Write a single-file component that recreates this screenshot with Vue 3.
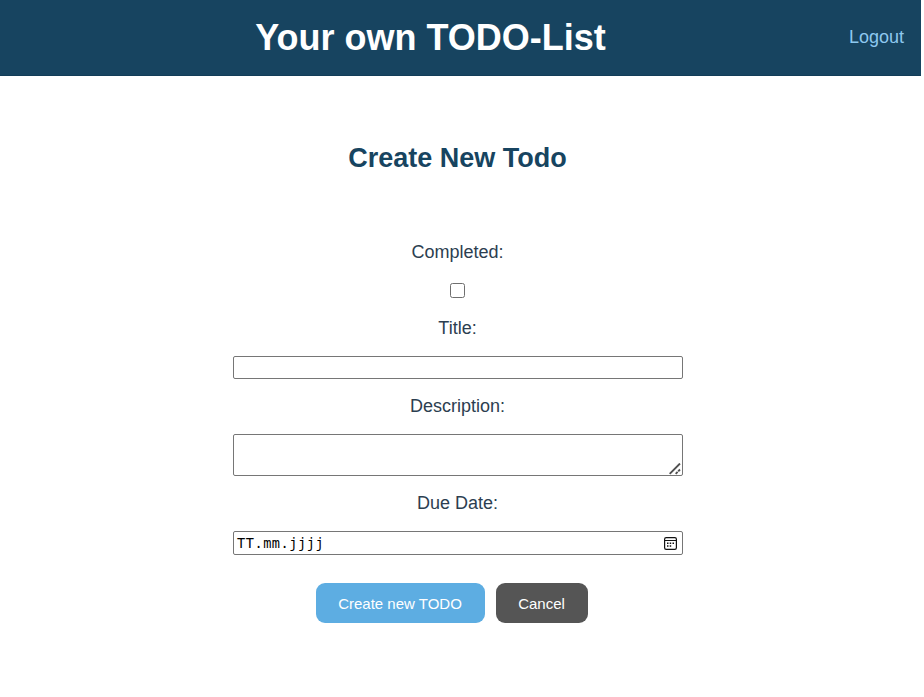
<script setup>
import { ref } from 'vue'

const completed = ref(false)
const title = ref('')
const description = ref('')
</script>

<template>
  <div class="page">
    <header class="header">
      <h1>Your own TODO-List</h1>
      <a class="logout">Logout</a>
    </header>
    <main class="content">
      <h2>Create New Todo</h2>
      <form class="form" @submit.prevent>
        <label for="completed">Completed:</label>
        <input id="completed" v-model="completed" class="check" type="checkbox" />
        <label for="title">Title:</label>
        <input id="title" v-model="title" class="field title" type="text" />
        <label for="description">Description:</label>
        <div class="area-wrap">
          <textarea id="description" v-model="description" class="field area"></textarea>
          <svg class="grip" width="12" height="12" viewBox="0 0 12 12">
            <path d="M.7 10.8 11 .5M6.7 10.8l1.9-1.9M9.2 8.3 11 6.5" fill="none" stroke="#505050" stroke-width="1.9" />
          </svg>
        </div>
        <label>Due Date:</label>
        <div class="field date" tabindex="0">
          <span class="date-text">TT.mm.jjjj</span>
          <svg width="13" height="13" viewBox="0 0 13 13">
            <rect x=".6" y=".6" width="11.8" height="11.8" rx="1.6" fill="none" stroke="#111" stroke-width="1.2" />
            <path d="M1 3.5h11" stroke="#111" stroke-width="1" />
            <path d="M3 5.5h1.5v1.5H3zM5.7 5.5h1.5v1.5H5.7zM8.5 5.5H10v1.5H8.5zM3 8.2h1.5v1.5H3zM5.7 8.2h1.5v1.5H5.7z" fill="#111" />
          </svg>
        </div>
        <div class="actions">
          <button class="btn create" type="submit">Create new TODO</button>
          <button class="btn cancel" type="button">Cancel</button>
        </div>
      </form>
    </main>
  </div>
</template>

<style>
body {
  background: #fff;
}
</style>

<style scoped>
.page {
  width: 921px;
  height: 697px;
  overflow: hidden;
  font-family: "Liberation Sans", Arial, sans-serif;
  font-size: 18px;
  color: #2c3e50;
}
.header {
  box-sizing: border-box;
  display: flex;
  align-items: center;
  height: 76px;
  padding-right: 17px;
  background: #174460;
  border-bottom: 1px solid #123d58;
}
h1 {
  flex: 1;
  margin: 0;
  padding-left: 12px;
  font-size: 36px;
  line-height: 42px;
  text-align: center;
  color: #fff;
}
.logout {
  padding-bottom: 2px;
  color: #8dc8ef;
  line-height: 20px;
}
.content {
  width: 916px;
}
h2 {
  margin: 0;
  padding: 66px 1px 0 0;
  font-size: 27px;
  line-height: 32px;
  text-align: center;
  color: #174460;
}
.form {
  display: flex;
  flex-direction: column;
  align-items: center;
  padding-top: 68px;
}
label {
  padding-right: 1px;
  line-height: 20px;
}
.check {
  appearance: none;
  box-sizing: border-box;
  width: 15px;
  height: 15px;
  margin: 21px 1px 20px 0;
  border: 1px solid #6f6f6f;
  border-radius: 2.5px;
  background: #fff;
}
.field {
  box-sizing: border-box;
  display: block;
  width: 450px;
  margin: 0;
  padding: 2px;
  border: 1px solid #767676;
  border-radius: 2px;
  background: #fff;
  outline: none;
}
.title {
  height: 23px;
  margin: 18px 0 17px;
}
.area-wrap {
  position: relative;
  margin: 18px 0 17px;
}
.area {
  height: 42px;
  resize: none;
}
.grip {
  position: absolute;
  right: 2px;
  bottom: 1px;
}
.date {
  display: flex;
  align-items: center;
  justify-content: space-between;
  height: 24px;
  margin: 18px 0 28px;
  padding: 0 5px 0 3px;
}
.date-text {
  font-family: "DejaVu Sans Mono", monospace;
  font-size: 13.6px;
  letter-spacing: 0.53px;
  color: #000;
}
.actions {
  display: flex;
  gap: 11px;
  padding-right: 12px;
}
.btn {
  height: 40px;
  padding: 0 1px 0 0;
  border: 0;
  border-radius: 9px;
  font-family: inherit;
  font-size: 15px;
  color: #fff;
}
.create {
  width: 169px;
  background: #5dade2;
}
.cancel {
  width: 92px;
  background: #555;
}
</style>
